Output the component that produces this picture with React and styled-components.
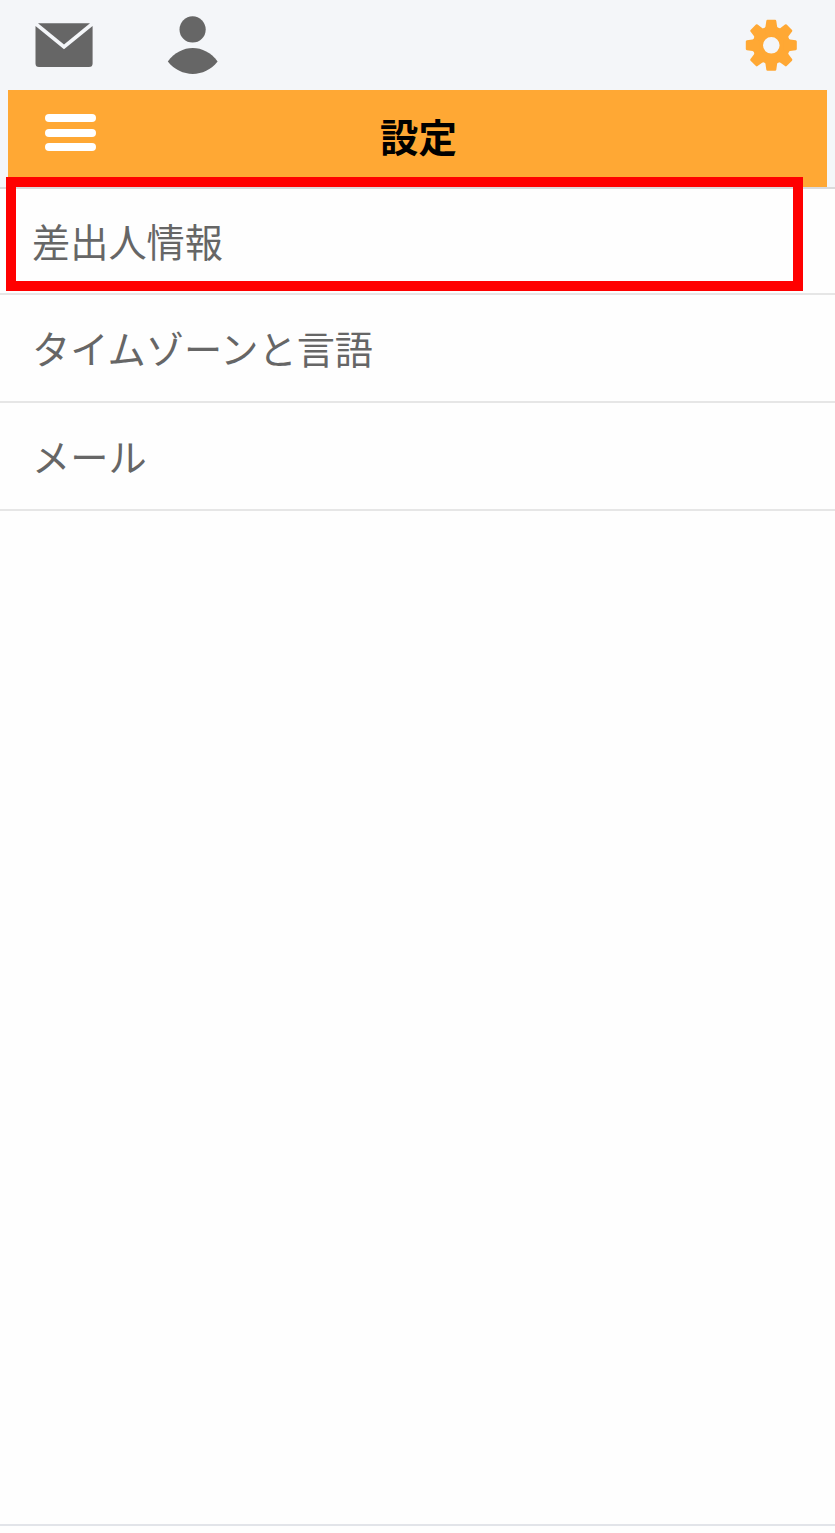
import React from 'react'
import styled, { createGlobalStyle } from 'styled-components'

const GlobalStyle = createGlobalStyle`
  body {
    margin: 0;
    background: #fefefe;
    font-family: 'Noto Sans CJK JP', sans-serif;
  }
`

const Screen = styled.div`
  display: flex;
  flex-direction: column;
  box-sizing: border-box;
  height: 1533px;
  overflow: hidden;
`

const Top = styled.header`
  flex: none;
  padding: 0 8px;
  background: #f4f6f9;
`

const Toolbar = styled.nav`
  display: flex;
  align-items: center;
  height: 90px;
  padding: 0 30px 0 27px;
`

const IconButton = styled.button`
  display: flex;
  padding: 0;
  border: 0;
  background: none;
  color: ${({ $active }) => ($active ? '#ffa834' : '#666')};
  margin-left: ${({ $push }) => $push || 0};

  svg {
    display: block;
  }
`

const TitleBar = styled.div`
  display: grid;
  grid-template-columns: 89px 1fr 87px;
  align-items: center;
  height: 97px;
  background: #ffa834;
`

const MenuButton = styled.button`
  display: flex;
  flex-direction: column;
  gap: 6.5px;
  width: 51px;
  margin: 0 0 12px 37px;
  padding: 0;
  border: 0;
  background: none;
`

const MenuBar = styled.span`
  height: 8px;
  border-radius: 4px;
  background: #fff;
`

const Title = styled.h1`
  margin: 0 0 7px;
  color: #000;
  font-size: 38.4px;
  font-weight: 700;
  line-height: 56px;
  text-align: center;
`

const List = styled.ul`
  flex: 1;
  margin: 0 0 7px;
  padding: 0;
  border-top: 2px solid #dadadc;
  border-bottom: 2px solid #e2e4e9;
  list-style: none;
`

const Item = styled.li`
  position: relative;
  display: flex;
  align-items: center;
  box-sizing: border-box;
  height: ${({ $height }) => $height || 108}px;
  padding: 0 32px 1px;
  border-bottom: 2px solid #e6e6e6;
  color: #666;
  font-size: 38.2px;
  line-height: 56px;
`

// frame laid over the item and the edge of the title bar
const Highlight = styled.span`
  position: absolute;
  top: -12px;
  left: 6px;
  box-sizing: border-box;
  width: 797px;
  height: 114px;
  border: 10px solid #f00;
`

const MailIcon = () => (
  <svg width="58" height="46" viewBox="0 0 58 46" fill="currentColor">
    <path d="M3 1.3H55L29 22.5Z" />
    <path d="M.5 4 29 27.2 57.6 4V41.5Q57.6 45 54 45H4Q.5 45 .5 41.5Z" />
  </svg>
)

const PersonIcon = () => (
  <svg width="52" height="60" viewBox="0 0 52 60" fill="currentColor">
    <circle cx="25.6" cy="14.4" r="13.1" />
    <path d="M.8 46.5C14 28.5 37.6 28.5 50.6 46.5C37.6 63 14 63 .8 46.5Z" />
  </svg>
)

const TEETH = [0, 45, 90, 135, 180, 225, 270, 315]

const GearIcon = () => (
  <svg width="52" height="52" viewBox="-26.3 -26.3 52 52" fill="currentColor">
    <circle r="13.5" fill="none" stroke="currentColor" strokeWidth="10.4" />
    {TEETH.map(angle => (
      <path
        key={angle}
        d="M-7.2 -16.9Q-5.9 -17.6 -5.8 -18.8L-5 -24.4Q-4.8 -25.5 -3.8 -25.5H3.8Q4.8 -25.5 5 -24.4L5.8 -18.8Q5.9 -17.6 7.2 -16.9L5 -12H-5Z"
        transform={`rotate(${angle})`}
      />
    ))}
  </svg>
)

const App = () => (
  <>
    <GlobalStyle />
    <Screen>
      <Top>
        <Toolbar>
          <IconButton aria-label="メール">
            <MailIcon />
          </IconButton>
          <IconButton aria-label="連絡先" $push="74px">
            <PersonIcon />
          </IconButton>
          <IconButton aria-label="設定" $active $push="auto">
            <GearIcon />
          </IconButton>
        </Toolbar>
        <TitleBar>
          <MenuButton aria-label="メニュー">
            <MenuBar />
            <MenuBar />
            <MenuBar />
          </MenuButton>
          <Title>設定</Title>
        </TitleBar>
      </Top>
      <List>
        <Item $height={106}>
          差出人情報
          <Highlight />
        </Item>
        <Item>タイムゾーンと言語</Item>
        <Item>メール</Item>
      </List>
    </Screen>
  </>
)

export default App
